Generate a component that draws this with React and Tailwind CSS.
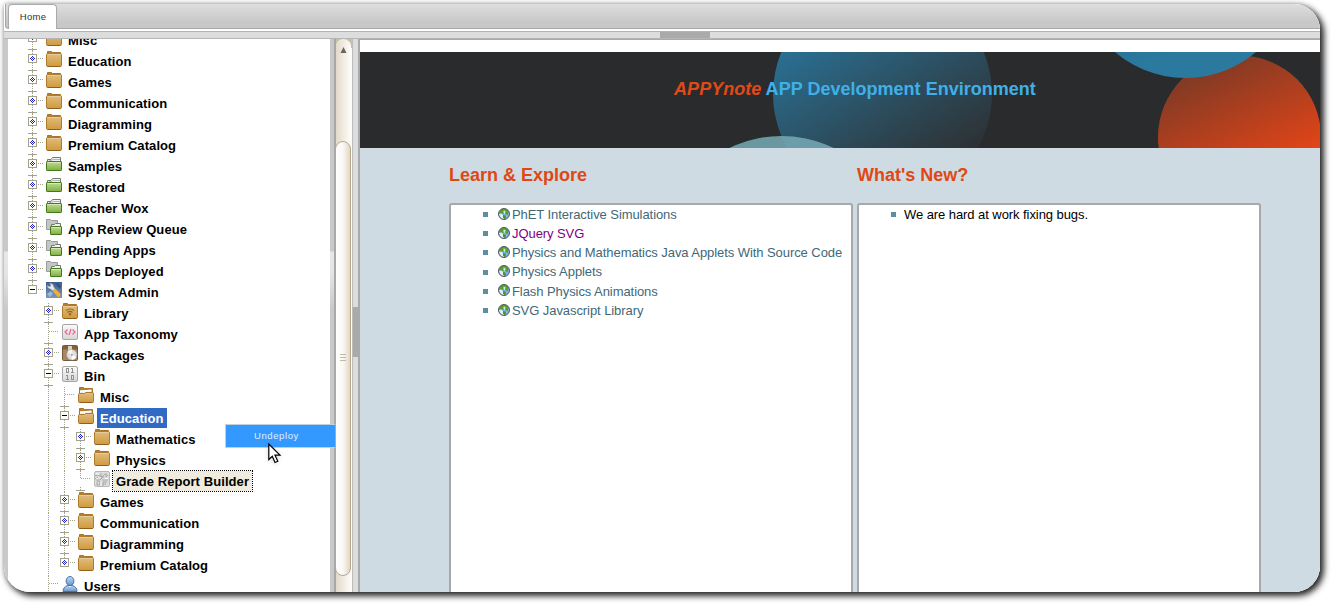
import React from "react";

const ROWS = [
  { t: "Misc", l: 0, i: "folder", b: "+" },
  { t: "Education", l: 0, i: "folder", b: "+" },
  { t: "Games", l: 0, i: "folder", b: "+" },
  { t: "Communication", l: 0, i: "folder", b: "+" },
  { t: "Diagramming", l: 0, i: "folder", b: "+" },
  { t: "Premium Catalog", l: 0, i: "folder", b: "+" },
  { t: "Samples", l: 0, i: "green", b: "+" },
  { t: "Restored", l: 0, i: "green", b: "+" },
  { t: "Teacher Wox", l: 0, i: "green", b: "+" },
  { t: "App Review Queue", l: 0, i: "queue", b: "+" },
  { t: "Pending Apps", l: 0, i: "queue", b: "+" },
  { t: "Apps Deployed", l: 0, i: "queue", b: "+" },
  { t: "System Admin", l: 0, i: "tools", b: "-", last: true },
  { t: "Library", l: 1, i: "library", b: "+" },
  { t: "App Taxonomy", l: 1, i: "code" },
  { t: "Packages", l: 1, i: "package", b: "+" },
  { t: "Bin", l: 1, i: "bin", b: "-" },
  { t: "Misc", l: 2, i: "open", g: [1] },
  { t: "Education", l: 2, i: "open", b: "-", g: [1], state: "selected" },
  { t: "Mathematics", l: 3, i: "folder", b: "+", g: [1, 2] },
  { t: "Physics", l: 3, i: "folder", b: "+", g: [1, 2] },
  { t: "Grade Report Builder", l: 3, i: "report", g: [1, 2], end: true, state: "focus" },
  { t: "Games", l: 2, i: "folder", b: "+", g: [1] },
  { t: "Communication", l: 2, i: "folder", b: "+", g: [1] },
  { t: "Diagramming", l: 2, i: "folder", b: "+", g: [1] },
  { t: "Premium Catalog", l: 2, i: "folder", b: "+", g: [1], last: true },
  { t: "Users", l: 1, i: "user" },
];

const LINKS = [
  "PhET Interactive Simulations",
  "JQuery SVG",
  "Physics and Mathematics Java Applets With Source Code",
  "Physics Applets",
  "Flash Physics Animations",
  "SVG Javascript Library",
];

function VLine({ x, y1, y2 }) {
  return <line x1={x + 0.5} x2={x + 0.5} y1={y1} y2={y2} stroke="#a3a38d" strokeDasharray="1 1" />;
}

function Connector({ row }) {
  const w = 22 + row.l * 16;
  const x = 8 + row.l * 16;
  return (
    <svg width={w} height="21" className="shrink-0" shapeRendering="crispEdges">
      {(row.g || []).map((n) => (
        <VLine key={n} x={8 + n * 16} y1={0} y2={21} />
      ))}
      <VLine x={x} y1={0} y2={row.b ? 3 : 8} />
      {!row.last && !row.end && <VLine x={x} y1={row.b ? 12 : 8} y2={21} />}
      {row.end && <VLine x={x} y1={16} y2={19} />}
      {!row.last && <rect x={x - 4} y="19" width="9" height="1" fill="#a3a38d" />}
      <line x1={row.b ? x + 6 : x + 1} x2={x + 11} y1="7.5" y2="7.5" stroke="#a3a38d" strokeDasharray="1 1" />
      {row.b && <rect x={x - 3.5} y="3.5" width="8" height="8" fill="#fff" stroke="#a3a38d" />}
      {row.b === "-" && <rect x={x - 2} y="7" width="5" height="1" fill="#000" />}
      {row.b === "+" && (
        <g fill="#1c1cd0">
          <rect x={x} y="5" width="1" height="1" />
          <rect x={x - 1} y="6" width="1" height="1" />
          <rect x={x + 1} y="6" width="1" height="1" />
          <rect x={x - 2} y="7" width="1" height="1" />
          <rect x={x} y="7" width="1" height="1" />
          <rect x={x + 2} y="7" width="1" height="1" />
          <rect x={x - 1} y="8" width="1" height="1" />
          <rect x={x + 1} y="8" width="1" height="1" />
          <rect x={x} y="9" width="1" height="1" />
        </g>
      )}
    </svg>
  );
}

function Defs() {
  return (
    <svg width="0" height="0" className="absolute">
      <defs>
        <linearGradient id="tan" x1="0" y1="0" x2="0" y2="1">
          <stop offset="0" stopColor="#dfbd80" />
          <stop offset="1" stopColor="#d19a3c" />
        </linearGradient>
        <linearGradient id="grn" x1="0" y1="0" x2="0" y2="1">
          <stop offset="0" stopColor="#c0df92" />
          <stop offset="1" stopColor="#7fae42" />
        </linearGradient>
        <linearGradient id="gry" x1="0" y1="0" x2="0" y2="1">
          <stop offset="0" stopColor="#fafafa" />
          <stop offset="1" stopColor="#d6d6d6" />
        </linearGradient>
        <linearGradient id="steel" x1="0" y1="0" x2="0" y2="1">
          <stop offset="0" stopColor="#3d5f8a" />
          <stop offset="1" stopColor="#7599c0" />
        </linearGradient>
        <linearGradient id="person" x1="0" y1="0" x2="0" y2="1">
          <stop offset="0" stopColor="#c3daf3" />
          <stop offset="1" stopColor="#6795cd" />
        </linearGradient>
      </defs>
    </svg>
  );
}

function Folder() {
  return (
    <>
      <path d="M1.5 3V.5H5.500L6.500 1.500H14.500V3" fill="#b77e2c" stroke="#a8742a" />
      <rect x=".5" y="2.5" width="15" height="13" rx="1.2" fill="url(#tan)" stroke="#b07b2c" />
      <path d="M1.5 3.5H14.5" stroke="#e6cc9b" />
      <path d="M1.500 15.500H14.500" stroke="#8f5f1e" />
    </>
  );
}

function IconArt({ name }) {
  switch (name) {
    case "folder":
      return <Folder />;
    case "library":
      return (
        <>
          <Folder />
          <g fill="none" stroke="#936522" strokeWidth="1.1">
            <path d="M4 7.5Q8 4.5 12 7.5M5.5 9.5Q8 7.3 10.5 9.5" />
            <circle cx="8" cy="11.3" r=".7" />
          </g>
        </>
      );
    case "open":
      return (
        <>
          <path d="M1.5 8V.5H5.5L6.5 1.5H14.5V8" fill="#b77e2c" stroke="#a8742a" />
          <path d="M2 8V3.5H13.500V8Z" fill="#eeeef2" />
          <path d="M2 3.500L13.500 2.500V4L2 5Z" fill="#fff" />
          <path d="M.5 7.500Q.5 6.500 1.500 6.500H6.500L7.500 5.500H14.5Q15.5 5.5 15.5 6.500V14.5Q15.5 15.5 14.5 15.5H1.5Q.5 15.5.5 14.5Z" fill="url(#tan)" stroke="#b07b2c" />
          <path d="M1.500 15.500H14.500" stroke="#8f5f1e" />
        </>
      );
    case "green":
      return (
        <>
          <path d="M1.5 8V3.5H5L6.500 1.5H14.5V8Z" fill="#f2f3f2" stroke="#747874" />
          <path d="M3 4.500H5.500L7 3.500H14" stroke="#b3b6b3" fill="none" />
          <rect x=".5" y="5.5" width="15" height="9" rx=".6" fill="url(#grn)" stroke="#42791b" />
          <path d="M1.5 6.5H14.5" stroke="#d6ecb5" />
        </>
      );
    case "queue":
      return (
        <>
          <path d="M.5 10.500V.5H4.5L5.5 1.5H11.5V10.500Z" fill="#c5c7c4" stroke="#9a9c99" />
          <path d="M5.500 11V5.500H8.500L9.500 4.500H14.500V11Z" fill="#f2f3f2" stroke="#737771" />
          <rect x="4.500" y="7.500" width="11" height="8" rx=".5" fill="url(#grn)" stroke="#42791b" />
          <path d="M5.500 8.500H14.500" stroke="#d6ecb5" />
        </>
      );
    case "tools":
      return (
        <>
          <rect width="16" height="16" fill="url(#steel)" />
          <path d="M9 2L14 7L15 4L12 1Z" fill="#33527c" />
          <path d="M1 12L5 9L7 12L4 15Z" fill="#9db9d8" />
          <path d="M8.500 8.500L12.700 12.900" stroke="#eeb03c" strokeWidth="3.800" strokeLinecap="round" />
          <path d="M3.500 1.500Q7.500 1 7.500 4.500L9 7L6.500 8.500L4.500 7Q1.500 6.500 1.200 3.500L3.800 4.800L5 3.500Z" fill="#e7ebee" stroke="#8f9aa6" strokeWidth=".4" />
        </>
      );
    case "code":
      return (
        <>
          <rect x=".5" y=".5" width="15" height="15" rx="1.500" fill="url(#gry)" stroke="#a6a6a6" />
          <path d="M5.500 5.500L3 8L5.500 10.500M10.500 5.500L13 8L10.500 10.500M9 5L7 11" fill="none" stroke="#ef5f90" strokeWidth="1.200" />
        </>
      );
    case "package":
      return (
        <>
          <rect x=".5" y=".5" width="15" height="15" rx="1" fill="#a98860" stroke="#75593a" />
          <path d="M1 1H15V4.500H1Z" fill="#80603f" />
          <path d="M6 1H10V6H6Z" fill="#dfd0ba" />
          <circle cx="9.800" cy="9.800" r="5.200" fill="#dedfe2" stroke="#9a9a9c" strokeWidth=".6" />
          <path d="M9.800 9.800L5.500 7Q7.500 4.500 10 4.700Z" fill="#faf7e8" />
          <path d="M9.800 9.800L14.500 12Q12.500 15 9.800 14.800Z" fill="#fff" />
          <circle cx="9.800" cy="9.800" r="1.600" fill="#b7aaa0" stroke="#fff" strokeWidth=".6" />
        </>
      );
    case "bin":
      return (
        <>
          <rect x=".5" y=".5" width="15" height="15" rx="1.500" fill="url(#gry)" stroke="#a6a6a6" />
          <g fill="none" stroke="#929292" shapeRendering="crispEdges">
            <rect x="4.500" y="2.500" width="2" height="4" />
            <path d="M9 2.500H10.500V6.500M9 6.500H12" />
            <path d="M4 9.500H5.500V13.500M4 13.500H7" />
            <rect x="9.500" y="9.500" width="2" height="4" />
          </g>
        </>
      );
    case "report":
      return (
        <>
          <rect x=".5" y=".5" width="15" height="15" rx="1.500" fill="#dedede" stroke="#b8b8b8" />
          <path d="M1 5Q4 3 6 5T11 3M7 2V6H10M12 2V6L14 4M2 9H6L9 6M8 9H14M3 11Q6 9 6 12T3 14ZM9 15V11H13M9 13H12M1 8L4 6" fill="none" stroke="#a6a6a6" />
          <path d="M2 3H5M11 8L14 7M7 11V14M2 7L4 8" stroke="#fafafa" />
        </>
      );
    default:
      return (
        <>
          <path d="M1 15.500Q1 11 5.500 9.500H10.500Q15 11 15 15.500Z" fill="url(#person)" stroke="#4672ac" />
          <path d="M5.500 10L8 12.500L10.500 10" fill="#dceafa" stroke="#6d96c9" strokeWidth=".7" />
          <ellipse cx="8" cy="5" rx="3.900" ry="4.500" fill="url(#person)" stroke="#4672ac" />
        </>
      );
  }
}

function TreeRow({ row }) {
  const label =
    row.state === "selected"
      ? "h-5 bg-[#316ac5] text-white"
      : row.state === "focus"
        ? "h-5 bg-[#efebde] text-black outline-1 outline-dotted outline-black"
        : "h-5 text-black";
  return (
    <div className="flex h-[21px] shrink-0 items-start">
      <Connector row={row} />
      <svg width="16" height="16" viewBox="0 0 16 16" className="shrink-0">
        <IconArt name={row.i} />
      </svg>
      <div className={"ml-[3px] whitespace-nowrap px-[3px] text-[13px] font-bold leading-[21px] tracking-[0.08px] " + label}>{row.t}</div>
    </div>
  );
}

function Globe() {
  return (
    <svg width="12" height="12" viewBox="0 0 12 12" className="-mt-0.5 shrink-0">
      <circle cx="6" cy="6" r="5.500" fill="#7fb4f0" />
      <path d="M1 6Q3 5 5 7L6.500 11Q2 11 1 6Z" fill="#e3ebf5" />
      <path d="M1 5.500Q2 1 6 .8Q9.500 1 10.500 4L9.500 7.500L7.500 6L6 4L5.500 6.500L3.500 5Z" fill="#55a02a" />
      <path d="M5 7L7.500 7.500L8 9.500L6.500 11.200L5 9.500Z" fill="#4b9127" />
      <path d="M5.500 2.500L7.500 3L7 6L5.500 5Z" fill="#d8ecd0" />
      <circle cx="6" cy="6" r="5.500" fill="none" stroke="#45494c" strokeWidth=".9" />
    </svg>
  );
}

function Scrollbar() {
  return (
    <div className="flex w-[18px] shrink-0 flex-col border-l-2 border-[#aaa8a5] bg-linear-to-r from-[#e2d9ca] to-[#fffefb]">
      <div className="flex h-[102px] shrink-0 flex-col bg-[linear-gradient(#cdbfa6,#cdbfa6_9px,transparent_9px)]">
        <div className="flex h-[102px] w-[15px] justify-center rounded-t-lg border-t border-[#f2eee7] bg-linear-to-r from-[#e2d9ca] to-[#fffefb] pt-[7px]">
          <svg width="7" height="6">
            <path d="M3.500 0L6.500 6H.5Z" fill="#6b6760" />
          </svg>
        </div>
      </div>
      <div className="-ml-px flex h-[435px] w-4 shrink-0 items-center justify-center rounded-lg border border-[#b9a78b] bg-linear-to-r from-white via-[#faf8f4] to-[#e1d6c6]">
        <div className="-mt-0.5 flex flex-col gap-0.5">
          <div className="h-px w-1.5 bg-[#c3b9a4]" />
          <div className="h-px w-1.5 bg-[#c3b9a4]" />
          <div className="h-px w-1.5 bg-[#c3b9a4]" />
        </div>
      </div>
    </div>
  );
}

function Banner() {
  return (
    <div className="relative flex h-24 shrink-0 justify-center bg-[#2a2b2d]">
      <svg width="960" height="96" className="absolute inset-0">
        <defs>
          <linearGradient id="c1" x1=".25" y1=".15" x2=".75" y2=".95">
            <stop offset="0" stopColor="#2a7195" />
            <stop offset=".8" stopColor="#2d393f" />
            <stop offset="1" stopColor="#2b2d2f" />
          </linearGradient>
          <linearGradient id="c4" x1=".3" y1="0" x2=".65" y2=".75">
            <stop offset="0" stopColor="#783926" />
            <stop offset="1" stopColor="#e64517" />
          </linearGradient>
          <linearGradient id="c3" x1="0" y1=".7" x2=".1" y2="1">
            <stop offset="0" stopColor="#2a678a" />
            <stop offset="1" stopColor="#2b799f" />
          </linearGradient>
        </defs>
        <circle cx="522.500" cy="42" r="109.500" fill="url(#c1)" />
        <circle cx="421.500" cy="203" r="119" fill="#74a9b3" fillOpacity=".87" />
        <circle cx="879.500" cy="85" r="81.500" fill="url(#c4)" />
        <circle cx="825.500" cy="-82.500" r="108.500" fill="url(#c3)" />
      </svg>
      <h1 className="relative mr-[-30px] pt-[25px] text-[18px] leading-6 font-bold tracking-[0.02px] whitespace-nowrap text-[#3fb0e8]">
        <em className="text-[#e04a16]">APPYnote</em> APP Development Environment
      </h1>
    </div>
  );
}

function Panel({ title, children }) {
  return (
    <section className="flex w-[404px] shrink-0 flex-col">
      <h2 className="h-[55px] pt-[15px] text-[18px] leading-6 font-bold text-[#df4814]">{title}</h2>
      <ul className="flex-1 rounded-t-[3px] border-2 border-b-0 border-[#a6a8a9] bg-white pl-8 text-[13px] tracking-[-0.07px]">{children}</ul>
    </section>
  );
}

export default function App() {
  return (
    <div className="h-[604px] w-[1332px] overflow-hidden bg-white pt-1 pl-1 font-['Liberation_Sans',Arial,sans-serif]">
      <Defs />
      <div className="relative h-[588px] w-[1316px] rounded-tr-[26px] rounded-b-[26px] shadow-[3px_3px_6px_1px_rgba(0,0,0,0.85),0_0_5px_rgba(0,0,0,0.1)]">
        <div className="flex h-full flex-col overflow-hidden rounded-tr-[26px] rounded-b-[26px] bg-white">
          <header className="ml-px flex h-[25px] shrink-0 rounded-bl-sm border-b border-l border-[#a6a6a6] bg-linear-to-b from-[#dedede] to-[#c8c8c8] to-75% pl-0.5">
            <div className="-mb-px flex w-[49px] justify-center rounded-t border border-b-0 border-[#aaa] bg-white pl-px text-[9.500px] leading-[23px] tracking-[0.3px] text-[#2e3035]">Home</div>
          </header>
          <div className="mt-0.5 flex h-2 shrink-0 border-y border-[#b5b5b5] bg-[#ddd] pl-[656px]">
            <div className="w-[50px] bg-[#aaa]" />
          </div>
          <div className="flex min-h-0 flex-1">
            <div className="w-1 shrink-0 bg-[linear-gradient(#c9c9c9_212px,#e8e8e8_213px,#e4e4e4_235px,#c9c9c9_270px)]" />
            <nav className="flex w-[322px] shrink-0 flex-col overflow-hidden pl-4">
              <div className="-mt-[9px] flex flex-col">
                {ROWS.map((row, i) => (
                  <TreeRow key={i} row={row} />
                ))}
              </div>
            </nav>
            <div className="w-1 shrink-0 bg-[linear-gradient(#c9c9c9_212px,#e8e8e8_213px,#e4e4e4_235px,#c9c9c9_270px)]" />
            <Scrollbar />
            <div className="flex w-2 shrink-0 flex-col border-r-2 border-l border-r-[#aaa] border-l-[#bbb] bg-[#ddd] pt-[268px]">
              <div className="h-[50px] bg-[#aaa]" />
            </div>
            <main className="flex w-[960px] shrink-0 flex-col border-t border-[#aaa] bg-[#cfdbe2]">
              <div className="h-3 shrink-0 bg-white" />
              <Banner />
              <div className="flex min-h-0 flex-1 gap-1 pl-[89px]">
                <Panel title="Learn & Explore">
                  {LINKS.map((t, i) => (
                    <li key={t} className="flex h-[19.2px] items-center">
                      <span className="mr-2.5 size-[5px] shrink-0 bg-[#5f8ea0]" />
                      <Globe />
                      <a className={"pl-0.5 whitespace-nowrap " + (i === 1 ? "text-[#800080]" : "text-[#416878]")}>{t}</a>
                    </li>
                  ))}
                </Panel>
                <Panel title="What's New?">
                  <li className="flex h-[19.2px] items-center text-black">
                    <span className="mr-2 size-[5px] shrink-0 bg-[#5f8ea0]" />
                    We are hard at work fixing bugs.
                  </li>
                </Panel>
              </div>
            </main>
          </div>
        </div>
        <div className="absolute top-[420px] left-[221px] h-6 w-[110px] border border-r-0 border-[#bfd0df] bg-[#39f] pl-7 text-[9.500px] leading-[22px] tracking-[0.6px] text-[#e0efff]">Undeploy</div>
        <svg width="14" height="22" viewBox="0 0 14 22" className="absolute top-[439px] left-[264px] drop-shadow-sm">
          <path d="M.8 1V16.500L4.300 13.200L7 19.500L9.800 18.300L7 12.200H12Z" fill="#fff" stroke="#000" strokeWidth="1.200" />
        </svg>
      </div>
    </div>
  );
}
